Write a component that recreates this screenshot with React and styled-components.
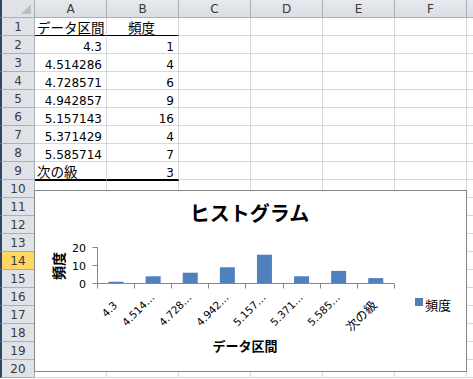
import React from 'react';
import styled, { createGlobalStyle, css } from 'styled-components';

const GlobalStyle = createGlobalStyle`
  html, body { margin: 0; padding: 0; background: #fff; overflow: hidden; }
  body { font-family: "DejaVu Sans", "Noto Sans CJK JP", sans-serif; }
`;

const Sheet = styled.div`
  position: relative;
  width: 473px;
  height: 379px;
  display: grid;
  grid-template-columns: 35px repeat(6, 72px) 1fr;
  grid-auto-rows: 18px;
  overflow: hidden;
  background: #fff;
`;

const Corner = styled.div`
  position: relative;
  box-sizing: border-box;
  background: #dfe3e8;
  border-left: 2px solid #2f4564;
  border-right: 1px solid #a9b0ba;
  border-bottom: 1px solid #a9b0ba;

  &::after {
    content: '';
    position: absolute;
    right: 3px;
    bottom: 3px;
    border-style: solid;
    border-width: 0 0 10px 10px;
    border-color: transparent transparent #b9bec6 transparent;
  }
`;

const ColHead = styled.div`
  box-sizing: border-box;
  background: linear-gradient(#e6e9ed, #dadee4);
  border-right: 1px solid #a9b0ba;
  border-bottom: 1px solid #a9b0ba;
  display: flex;
  align-items: center;
  justify-content: center;
  font-size: 12px;
  color: #3a3a3a;
`;

const RowHead = styled.div`
  box-sizing: border-box;
  border-left: 2px solid #2f4564;
  border-right: 1px solid #a9b0ba;
  border-bottom: 1px solid #a9b0ba;
  background: #dfe3e8;
  display: flex;
  align-items: center;
  justify-content: center;
  font-size: 12px;
  color: #3a3a3a;

  ${(p) =>
    p.$active &&
    css`
      background: #ffd65f;
      border-top: 1px solid #e2a436;
      border-right-color: #e2a436;
      border-bottom-color: #e2a436;
      margin-top: -1px;
    `}
`;

const Cell = styled.div`
  box-sizing: border-box;
  border-right: 1px solid #d8d8d8;
  border-bottom: 1px solid #d8d8d8;
  display: flex;
  align-items: flex-end;
  justify-content: ${(p) =>
    p.$align === 'right' ? 'flex-end' : p.$align === 'center' ? 'center' : 'flex-start'};
  padding: 0 4px 0 2px;
  font-size: 12px;
  line-height: 1;
  color: #000;
  white-space: nowrap;
  overflow: visible;

  ${(p) =>
    p.$under === 'thin' &&
    css`
      border-bottom-color: #000;
    `}
  ${(p) =>
    p.$under === 'thick' &&
    css`
      border-bottom: 2px solid #000;
      margin-bottom: -1px;
      position: relative;
      z-index: 1;
    `}
`;

const Jp = styled.span`
  font-family: "Noto Sans CJK JP", sans-serif;
  font-size: 13.5px;
  line-height: 16px;
`;

const ChartBox = styled.div`
  position: absolute;
  left: 34px;
  top: 190px;
  width: 433px;
  height: 182px;
  box-sizing: border-box;
  border: 1px solid #868686;
  background: #fff;
  z-index: 2;
`;

const Plot = styled.svg`
  display: block;
  font-family: "DejaVu Sans", "Noto Sans CJK JP", sans-serif;
`;

const columns = ['A', 'B', 'C', 'D', 'E', 'F', ''];

const data = [
  { a: 'データ区間', b: '頻度', head: true },
  { a: '4.3', b: '1' },
  { a: '4.514286', b: '4' },
  { a: '4.728571', b: '6' },
  { a: '4.942857', b: '9' },
  { a: '5.157143', b: '16' },
  { a: '5.371429', b: '4' },
  { a: '5.585714', b: '7' },
  { a: '次の級', b: '3', last: true },
];

const bins = [
  { label: '4.3', v: 1 },
  { label: '4.514…', v: 4, cut: true },
  { label: '4.728…', v: 6, cut: true },
  { label: '4.942…', v: 9, cut: true },
  { label: '5.157…', v: 16, cut: true },
  { label: '5.371…', v: 4, cut: true },
  { label: '5.585…', v: 7, cut: true },
  { label: '次の級', v: 3, jp: true },
];

const AX = 62.5;
const AY = 92.5;
const CW = 37.1;
const UNIT = 1.8;

function Chart() {
  return (
    <ChartBox>
      <Plot width="431" height="180" viewBox="0 0 431 180">
        <text x="214.5" y="30" textAnchor="middle" fontSize="20" fontWeight="bold"
          fontFamily='"Noto Sans CJK JP", sans-serif'>ヒストグラム</text>

        {/* y axis */}
        <line x1={AX} y1="56" x2={AX} y2={AY} stroke="#868686" />
        {[20, 10, 0].map((t) => {
          const y = AY - t * UNIT;
          return (
            <g key={t}>
              <line x1={AX - 5} y1={y} x2={AX} y2={y} stroke="#868686" />
              <text x="51" y={y + 4} textAnchor="end" fontSize="11" fill="#000">{t}</text>
            </g>
          );
        })}

        {/* bars */}
        {bins.map((b, i) => {
          const c = AX + CW * (i + 0.5);
          const h = b.v * UNIT;
          return <rect key={i} x={c - 7.5} y={AY - h} width="15" height={h} fill="#4f81bd" />;
        })}

        {/* x axis */}
        <line x1={AX} y1={AY} x2={AX + CW * 8} y2={AY} stroke="#868686" />
        {bins.concat([null]).map((_, i) => {
          const x = Math.round(AX + CW * i - 0.5) + 0.5;
          return <line key={i} x1={x} y1={AY} x2={x} y2={AY + 5} stroke="#868686" />;
        })}
        {bins.map((b, i) => {
          const px = AX + CW * (i + 0.5) + 2;
          const py = b.cut ? 107 : 115;
          return (
            <text key={i} x={px} y={py} textAnchor="end" fontSize={b.jp ? 12.5 : 10.5}
              fontFamily={b.jp ? '"Noto Sans CJK JP", sans-serif' : undefined}
              transform={`rotate(-45 ${px} ${py})`}>{b.label}</text>
          );
        })}

        {/* axis titles */}
        <text x="29" y="75" textAnchor="middle" fontSize="14" fontWeight="bold"
          fontFamily='"Noto Sans CJK JP", sans-serif' transform="rotate(-90 29 75)">頻度</text>
        <text x="210" y="160" textAnchor="middle" fontSize="13" fontWeight="bold"
          fontFamily='"Noto Sans CJK JP", sans-serif'>データ区間</text>

        {/* legend */}
        <rect x="380" y="107" width="8" height="8" fill="#4f81bd" />
        <text x="390" y="119" fontSize="13" fontFamily='"Noto Sans CJK JP", sans-serif'>頻度</text>
      </Plot>
    </ChartBox>
  );
}

export default function App() {
  const rows = Array.from({ length: 20 }, (_, i) => i + 1);
  return (
    <>
      <GlobalStyle />
      <Sheet>
        <Corner />
        {columns.map((c, i) => (
          <ColHead key={i}>{c}</ColHead>
        ))}
        {rows.map((r) => {
          const d = data[r - 1];
          const under = d ? (d.head ? 'thin' : d.last ? 'thick' : null) : null;
          return (
            <React.Fragment key={r}>
              <RowHead $active={r === 14}>{r}</RowHead>
              <Cell $align={d && !d.head && !d.last ? 'right' : 'left'} $under={under}>
                {d && (/[^\d.]/.test(d.a) ? <Jp>{d.a}</Jp> : d.a)}
              </Cell>
              <Cell $align={d && d.head ? 'center' : 'right'} $under={under}>
                {d && (d.head ? <Jp>{d.b}</Jp> : d.b)}
              </Cell>
              {[0, 1, 2, 3, 4].map((k) => (
                <Cell key={k} />
              ))}
            </React.Fragment>
          );
        })}
        <Chart />
      </Sheet>
    </>
  );
}
